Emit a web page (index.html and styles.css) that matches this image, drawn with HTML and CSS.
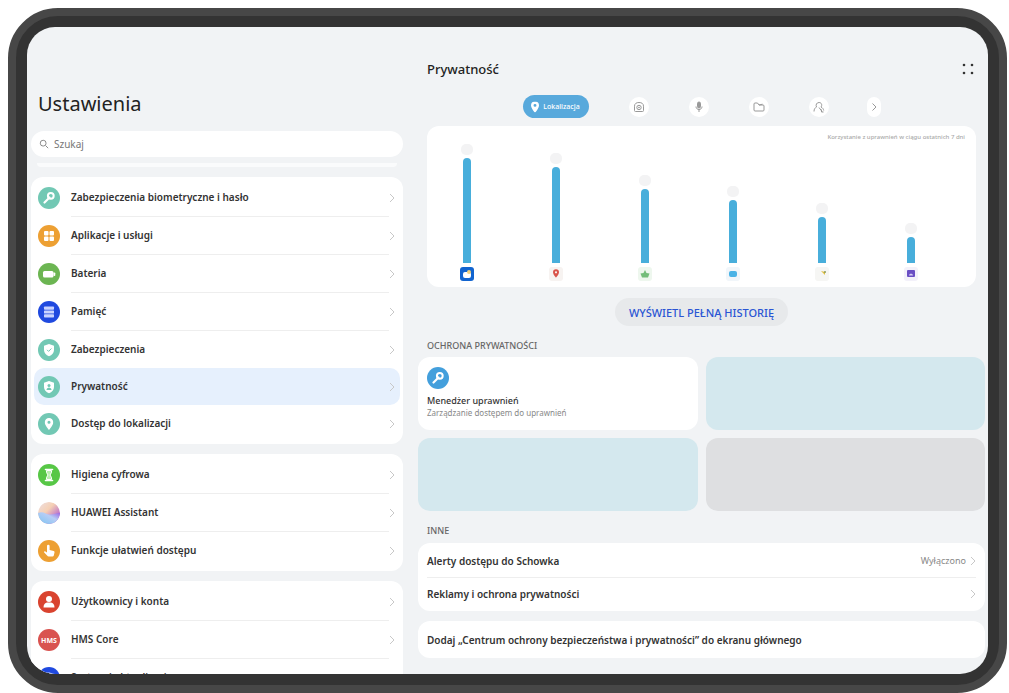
FILE: index.html
```
<!DOCTYPE html>
<html lang="pl">
<head>
    <meta charset="UTF-8">
    <meta name="viewport" content="width=device-width, initial-scale=1.0">
    <title>Ustawienia - Prywatność</title>
    <link rel="stylesheet" href="styles.css">
</head>
<body>
  <!-- shared icons -->
  <svg class="sprite" aria-hidden="true">
    <symbol id="chevron" viewBox="0 0 6 10"><path d="M1 1l4 4-4 4" fill="none" stroke="currentColor"/></symbol>
    <symbol id="key" viewBox="0 0 22 22">
      <path d="M11.500 10.500L6.500 15.500" stroke="#fff" stroke-width="2.200" stroke-linecap="round"/>
      <circle cx="12.800" cy="8.800" r="2.900" fill="none" stroke="#fff" stroke-width="2"/>
    </symbol>
    <symbol id="pin" viewBox="0 0 10 14"><path d="M5 0a5 5 0 0 0-5 5c0 3.500 5 9 5 9s5-5.500 5-9a5 5 0 0 0-5-5zm0 3.200a1.800 1.800 0 1 1 0 3.600 1.800 1.800 0 0 1 0-3.600z" fill="currentColor"/></symbol>
  </svg>

  <div class="device">
    <div class="screen">
      <aside class="sidebar">
        <h1>Ustawienia</h1>
        <div class="search">
          <svg viewBox="0 0 12 12"><circle cx="5" cy="5" r="3.500"/><path d="M8 8l3 3"/></svg>
          <input type="text" id="search" placeholder="Szukaj" aria-label="Szukaj">
        </div>
        <div class="strip"></div>

        <nav class="card menu">
          <a href="#" class="row">
            <svg class="icon teal" viewBox="0 0 22 22"><use href="#key"/></svg>
            <span class="label">Zabezpieczenia biometryczne i hasło</span>
            <svg class="chevron"><use href="#chevron"/></svg>
          </a>
          <a href="#" class="row">
            <svg class="icon orange" viewBox="0 0 22 22" fill="#fff"><rect x="6" y="6" width="4.500" height="4.500" rx="1"/><rect x="11.500" y="6" width="4.500" height="4.500" rx="1"/><rect x="6" y="11.500" width="4.500" height="4.500" rx="1"/><rect x="11.500" y="11.500" width="4.500" height="4.500" rx="1"/></svg>
            <span class="label">Aplikacje i usługi</span>
            <svg class="chevron"><use href="#chevron"/></svg>
          </a>
          <a href="#" class="row">
            <svg class="icon green" viewBox="0 0 22 22" fill="#fff"><rect x="5" y="8" width="10.500" height="6.500" rx="1.500"/><rect x="15.500" y="9.500" width="1.800" height="3.500" rx=".8"/></svg>
            <span class="label">Bateria</span>
            <svg class="chevron"><use href="#chevron"/></svg>
          </a>
          <a href="#" class="row">
            <svg class="icon blue" viewBox="0 0 22 22" fill="#c9d3ff"><rect x="6" y="5.500" width="10" height="3.200" rx=".7"/><rect x="6" y="9.400" width="10" height="3.200" rx=".7"/><rect x="6" y="13.300" width="10" height="3.200" rx=".7"/></svg>
            <span class="label">Pamięć</span>
            <svg class="chevron"><use href="#chevron"/></svg>
          </a>
          <a href="#" class="row plain">
            <svg class="icon teal" viewBox="0 0 22 22"><path d="M11 5l5 1.800v4.200c0 3-2 5-5 6.200-3-1.200-5-3.200-5-6.200V6.800z" fill="#fff"/><path d="M9 10.800l1.600 1.600 2.800-2.900" fill="none" stroke="#72c8b4"/></svg>
            <span class="label">Zabezpieczenia</span>
            <svg class="chevron"><use href="#chevron"/></svg>
          </a>
          <a href="#" class="row plain selected" aria-current="page">
            <svg class="icon teal" viewBox="0 0 22 22"><path d="M11 5l5 1.800v4.200c0 3-2 5-5 6.200-3-1.200-5-3.200-5-6.200V6.800z" fill="#fff"/><circle cx="11" cy="9.500" r="1.500" fill="#72c8b4"/><path d="M8.500 14c0-3.500 5-3.500 5 0z" fill="#72c8b4"/></svg>
            <span class="label">Prywatność</span>
            <svg class="chevron"><use href="#chevron"/></svg>
          </a>
          <a href="#" class="row plain">
            <svg class="icon teal" viewBox="0 0 22 22"><use href="#pin" x="6.500" y="5" width="9" height="12" color="#fff"/></svg>
            <span class="label">Dostęp do lokalizacji</span>
            <svg class="chevron"><use href="#chevron"/></svg>
          </a>
        </nav>

        <nav class="card menu">
          <a href="#" class="row">
            <svg class="icon lime" viewBox="0 0 22 22"><path d="M7.500 5.500h7M7.500 16.500h7" stroke="#fff" stroke-width="1.600" stroke-linecap="round"/><path d="M8.500 6.500h5v2L12 11l1.500 2.500v2h-5v-2L10 11 8.500 8.500z" fill="#b9efae" stroke="#fff"/></svg>
            <span class="label">Higiena cyfrowa</span>
            <svg class="chevron"><use href="#chevron"/></svg>
          </a>
          <a href="#" class="row">
            <svg class="icon" viewBox="0 0 22 22">
              <defs>
                <linearGradient id="sky" x1="0" y1="0" x2="1" y2="1"><stop offset="0" stop-color="#eddfe3"/><stop offset=".4" stop-color="#f5d0b4"/><stop offset=".8" stop-color="#b565cc"/></linearGradient>
                <linearGradient id="sea" x1="0" y1="1" x2="1" y2="0"><stop offset="0" stop-color="#7cc4f2"/><stop offset=".6" stop-color="#b7cdf5"/><stop offset="1" stop-color="#9a5fe0"/></linearGradient>
              </defs>
              <circle cx="11" cy="11" r="11" fill="url(#sky)"/>
              <path d="M0 11c5-2.500 8 1.500 12 1.500 4 0 6-1.500 10-1.500a11 11 0 0 1-22 0z" fill="url(#sea)"/>
            </svg>
            <span class="label">HUAWEI Assistant</span>
            <svg class="chevron"><use href="#chevron"/></svg>
          </a>
          <a href="#" class="row plain">
            <svg class="icon orange" viewBox="0 0 22 22" fill="#fff"><path d="M9 6a1.300 1.300 0 0 1 2.600 0v4l4 1c.8.200 1 .8.900 1.500l-.7 3c-.2.700-.6 1-1.200 1h-4c-.6 0-1-.3-1.300-.7L6.200 12.500c-.5-.8.400-1.600 1.200-1.100L9 12.500z"/></svg>
            <span class="label">Funkcje ułatwień dostępu</span>
            <svg class="chevron"><use href="#chevron"/></svg>
          </a>
        </nav>

        <nav class="card menu">
          <a href="#" class="row">
            <svg class="icon red" viewBox="0 0 22 22" fill="#fff"><circle cx="11" cy="8" r="3"/><path d="M5.500 16.500c0-3 1.500-4.500 3.500-5h4c2 .5 3.500 2 3.500 5z"/></svg>
            <span class="label">Użytkownicy i konta</span>
            <svg class="chevron"><use href="#chevron"/></svg>
          </a>
          <a href="#" class="row">
            <span class="icon hms">HMS</span>
            <span class="label">HMS Core</span>
            <svg class="chevron"><use href="#chevron"/></svg>
          </a>
          <a href="#" class="row plain">
            <svg class="icon blue" viewBox="0 0 22 22"><circle cx="11" cy="11" r="4.500" fill="none" stroke="#fff" stroke-width="2"/></svg>
            <span class="label">System i aktualizacje</span>
            <svg class="chevron"><use href="#chevron"/></svg>
          </a>
        </nav>
      </aside>

      <main class="content">
        <header>
          <h2>Prywatność</h2>
          <button class="more" aria-label="Więcej">
            <svg viewBox="0 0 12 12"><circle cx="2" cy="2" r="1.300"/><circle cx="10" cy="2" r="1.300"/><circle cx="2" cy="10" r="1.300"/><circle cx="10" cy="10" r="1.300"/></svg>
          </button>
        </header>

        <div class="tabs">
          <button class="tab active"><svg viewBox="0 0 10 14"><use href="#pin"/></svg>Lokalizacja</button>
          <button class="tab" aria-label="Aparat"><svg viewBox="0 0 12 12"><path d="M1.500 5.200C1.500 2.500 3.500 1.500 6 1.500s4.500 1 4.500 3.700v4.300a1 1 0 0 1-1 1h-7a1 1 0 0 1-1-1z"/><circle cx="6" cy="6.500" r="2.200"/><circle cx="6" cy="6.500" r=".5"/></svg></button>
          <button class="tab" aria-label="Mikrofon"><svg viewBox="0 0 12 12"><rect x="4.500" y="1" width="3" height="6" rx="1.500" fill="#999"/><path d="M3 5.500c0 4 6 4 6 0M6 8.500v2.500"/></svg></button>
          <button class="tab" aria-label="Pliki"><svg viewBox="0 0 12 12"><path d="M1 9V3a1 1 0 0 1 1-1h2.500L6 4h4a1 1 0 0 1 1 1v4a1 1 0 0 1-1 1H2a1 1 0 0 1-1-1zM6 4l3.500-.8"/></svg></button>
          <button class="tab" aria-label="Kontakty"><svg viewBox="0 0 12 12"><path d="M1 10.500c0-2.500 1.200-3.800 2.500-4.500C2.500 4 3.500 1.500 6 1.500S9.500 4 8 6c1.500.7 2.500 2 2.700 3.500M6 6.500l3 4M8.500 8.500v2.500h2"/></svg></button>
          <button class="tab next" aria-label="Dalej"><svg viewBox="0 0 12 12"><path d="M4.500 2.500L8 6 4.500 9.500"/></svg></button>
        </div>

        <section class="chart">
          <p class="caption">Korzystanie z uprawnień w ciągu ostatnich 7 dni</p>
          <div class="bars">
            <div class="item">
              <span class="bubble"></span><span class="bar" style="height: 105px"></span>
              <svg viewBox="0 0 14 14"><rect width="14" height="14" rx="3" fill="#1264cf"/><rect x="3" y="5" width="8" height="6" rx="2" fill="#fff"/><circle cx="9" cy="5" r="2" fill="#f2d27c"/></svg>
            </div>
            <div class="item">
              <span class="bubble"></span><span class="bar" style="height: 96px"></span>
              <svg viewBox="0 0 14 14"><rect width="14" height="14" rx="3" fill="#f7f3f1"/><use href="#pin" x="4" y="2" width="6" height="9" color="#d9534a"/></svg>
            </div>
            <div class="item">
              <span class="bubble"></span><span class="bar" style="height: 74px"></span>
              <svg viewBox="0 0 14 14"><rect width="14" height="14" rx="3" fill="#eef7ee"/><path d="M7 3l1.500 3 3 .5L10 10.500H4L2.500 6.500l3-.5z" fill="#74bd7a"/></svg>
            </div>
            <div class="item">
              <span class="bubble"></span><span class="bar" style="height: 63px"></span>
              <svg viewBox="0 0 14 14"><rect width="14" height="14" rx="3" fill="#f1f6fa"/><rect x="3" y="4" width="8" height="6" rx="2" fill="#4ab3e6"/></svg>
            </div>
            <div class="item">
              <span class="bubble"></span><span class="bar" style="height: 46px"></span>
              <svg viewBox="0 0 14 14"><rect width="14" height="14" rx="3" fill="#f6f6f4"/><path d="M6 4l4 1v3z" fill="#e0bd3c"/><circle cx="10" cy="5" r="1" fill="#8a9a5a"/></svg>
            </div>
            <div class="item">
              <span class="bubble"></span><span class="bar" style="height: 26px"></span>
              <svg viewBox="0 0 14 14"><rect width="14" height="14" rx="3" fill="#f3f1fa"/><rect x="3" y="3" width="8" height="7" rx="1" fill="#6a4fc4"/><path d="M5 8.500c0-2.500 4-2.500 4 0z" fill="#d6cdf5"/></svg>
            </div>
          </div>
        </section>

        <button class="history">WYŚWIETL PEŁNĄ HISTORIĘ</button>

        <h3>OCHRONA PRYWATNOŚCI</h3>
        <div class="tiles">
          <a href="#" class="tile">
            <svg class="icon sky" viewBox="0 0 22 22"><use href="#key"/></svg>
            <span class="tile-title">Menedżer uprawnień</span>
            <span class="tile-text">Zarządzanie dostępem do uprawnień</span>
          </a>
          <div class="tile tint"></div>
          <div class="tile tint"></div>
          <div class="tile gray"></div>
        </div>

        <h3>INNE</h3>
        <div class="card options">
          <a href="#" class="option">
            <span class="label">Alerty dostępu do Schowka</span>
            <span class="value">Wyłączono</span>
            <svg class="chevron"><use href="#chevron"/></svg>
          </a>
          <a href="#" class="option">
            <span class="label">Reklamy i ochrona prywatności</span>
            <svg class="chevron"><use href="#chevron"/></svg>
          </a>
        </div>
        <div class="card options">
          <a href="#" class="option single">
            <span class="label">Dodaj „Centrum ochrony bezpieczeństwa i prywatności” do ekranu głównego</span>
          </a>
        </div>
      </main>
    </div>
  </div>
</body>
</html>
```
FILE: styles.css
```
* {
    box-sizing: border-box;
}
body {
    margin: 0;
    padding: 8px 2px 0 8px;
    height: 100vh;
    background: #fff;
    font-family: "Noto Sans", "Open Sans", sans-serif;
    color: #333;
}
h1, h2, h3, p {
    margin: 0;
}
a {
    color: inherit;
    text-decoration: none;
}
button {
    border: none;
    padding: 0;
    font-family: inherit;
    cursor: pointer;
}
svg {
    display: block;
    flex: none;
}
.sprite {
    display: none;
}

/* tablet frame */
.device {
    height: 100%;
    padding: 11px;
    border: 8px solid #474747;
    border-radius: 50px;
    background: #333;
}
.screen {
    height: 100%;
    display: grid;
    grid-template-columns: 376fr 585fr;
    border-radius: 28px;
    background: #f1f3f5;
    overflow: hidden;
}
.card {
    background: #fff;
    border-radius: 12px;
}
.icon {
    width: 22px;
    height: 22px;
    border-radius: 50%;
}
.teal { background: #72c8b4; }
.orange { background: #eda033; }
.green { background: #6cb552; }
.blue { background: #1f49df; }
.lime { background: #57c746; }
.red { background: #d9432f; }
.sky { background: #439fdc; }
.hms {
    display: flex;
    align-items: center;
    justify-content: center;
    background: #d95350;
    color: #fff;
    font-size: 7px;
    font-weight: 700;
}
.chevron {
    width: 6px;
    height: 10px;
    color: #c8c8c8;
}

/* left panel */
.sidebar {
    min-height: 0;
    padding: 62px 0 0 4px;
    overflow: hidden;
}
h1 {
    padding-left: 7px;
    font-size: 20px;
    font-weight: 400;
    line-height: 30px;
    color: #222;
}
.search {
    display: flex;
    align-items: center;
    gap: 5px;
    height: 26px;
    margin-top: 12px;
    padding: 0 8px;
    border-radius: 13px;
    background: #fff;
}
.search svg {
    width: 10px;
    height: 10px;
    fill: none;
    stroke: #777;
}
.search input {
    flex: 1;
    min-width: 0;
    padding: 0;
    border: none;
    outline: none;
    background: none;
    font-family: inherit;
    font-size: 10px;
}
.search input::placeholder {
    color: #777;
}
.strip {
    height: 4px;
    margin: 6px 6px 10px;
    border-radius: 0 0 4px 4px;
    background: #fafbfc;
}
.menu {
    margin-bottom: 10px;
    padding: 2px 0;
}
.row {
    display: flex;
    align-items: center;
    height: 38px;
    margin: 0 3px;
    padding: 0 5px 0 4px;
    border-radius: 10px;
    gap: 11px;
}
.row .label {
    flex: 1;
    height: 38px;
    line-height: 37px;
    border-bottom: 1px solid #eee;
}
.row.plain, .row.plain .label {
    height: 37px;
    border-bottom: none;
}
.row .chevron {
    margin-left: -11px;
}
.row.selected {
    background: #e6f0fd;
}
.label {
    font-size: 10px;
    font-weight: 600;
    white-space: nowrap;
}

/* right panel */
.content {
    min-width: 0;
    padding: 31px 3px 0 15px;
}
header {
    display: flex;
    align-items: center;
    justify-content: space-between;
    padding: 0 11px 0 9px;
}
h2 {
    font-size: 13px;
    font-weight: 500;
    line-height: 22px;
    color: #222;
}
.more {
    background: none;
}
.more svg {
    width: 12px;
    height: 12px;
    fill: #333;
}
.tabs {
    display: flex;
    align-items: center;
    justify-content: center;
    gap: 40px;
    margin-top: 15px;
}
.tab {
    display: flex;
    align-items: center;
    justify-content: center;
    width: 20px;
    height: 20px;
    border-radius: 10px;
    background: #fff;
}
.tab svg {
    width: 12px;
    height: 12px;
    fill: none;
    stroke: #999;
}
.tab.active {
    gap: 4px;
    width: 66px;
    height: 23px;
    border-radius: 12px;
    background: #58a9dc;
    color: #fff;
    font-size: 7px;
    font-weight: 500;
}
.tab.active svg {
    width: 8px;
    stroke: none;
}
.tab.next {
    width: 14px;
    margin-left: -2px;
}
.chart {
    display: flex;
    flex-direction: column;
    height: 161px;
    margin: 8px 9px 0;
    padding: 6px 11px 6px;
    border-radius: 12px;
    background: #fff;
}
.caption {
    align-self: flex-end;
    font-size: 6px;
    font-weight: 500;
    line-height: 10px;
    color: #aaa;
}
.bars {
    flex: 1;
    display: flex;
    align-items: flex-end;
    justify-content: space-between;
    padding: 0 47px 0 22px;
}
.item {
    display: flex;
    flex-direction: column;
    align-items: center;
    height: 0;
    justify-content: flex-end;
}
.item svg {
    width: 14px;
    height: 14px;
    margin-top: 4px;
}
.bubble {
    flex: none;
    width: 12px;
    height: 11px;
    margin-bottom: 3px;
    border-radius: 5px;
    background: #f3f3f4;
}
.bar {
    flex: none;
    width: 8px;
    border-radius: 4px 4px 0 0;
    background: #48aedb;
}
.history {
    display: block;
    height: 28px;
    margin: 11px auto 0;
    padding: 0 14px;
    border-radius: 14px;
    background: #e7e9eb;
    color: #2a55d4;
    font-size: 11px;
    font-weight: 500;
}
h3 {
    margin: 11px 0 0 9px;
    font-size: 9px;
    font-weight: 500;
    line-height: 18px;
    color: #666;
}
.tiles {
    display: grid;
    grid-template-columns: 1fr 1fr;
    gap: 8px;
    margin-top: 2px;
}
.tile {
    display: flex;
    flex-direction: column;
    height: 73px;
    padding: 10px 9px;
    border-radius: 12px;
    background: #fff;
}
.tile.tint {
    background: #d4e8ee;
}
.tile.gray {
    background: #dedfe1;
}
.tile-title {
    margin-top: 5px;
    font-size: 9px;
    font-weight: 500;
    line-height: 14px;
}
.tile-text {
    font-size: 8px;
    line-height: 10px;
    color: #888;
}
.options {
    margin-top: 3px;
    padding: 1px 9px;
}
.options + .options {
    margin-top: 10px;
}
.option {
    display: flex;
    align-items: center;
    gap: 4px;
    height: 33px;
}
.option + .option {
    border-top: 1px solid #eee;
}
.option.single {
    height: 35px;
}
.option .label {
    flex: 1;
}
.value {
    font-size: 9px;
    color: #888;
}
```
